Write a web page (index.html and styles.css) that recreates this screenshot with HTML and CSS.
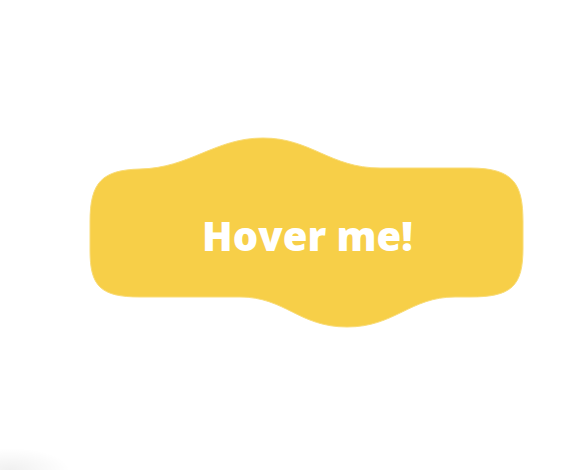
FILE: index.html
```html
<!DOCTYPE html>
<html>
<head>
<meta charset="utf-8">
<link rel="stylesheet" href="styles.css">
</head>
<body>
<div class="stage">
  <button class="blob-btn">
    <svg class="blob" viewBox="89 136 437 193" width="437" height="193" aria-hidden="true">
      <path d="M 90 222
               C 90 182, 102 170, 140 169
               C 190 168, 215 138, 263 138
               C 311 138, 330 168, 380 168
               L 470 168
               C 514 168, 523 184, 523 222
               L 523 248
               C 523 286, 512 297, 470 297
               L 455 297
               C 410 297, 395 327, 347 327
               C 299 327, 285 297, 240 297
               L 140 297
               C 100 297, 90 286, 90 250
               Z" />
    </svg>
    <span class="label">Hover me!</span>
  </button>
</div>
</body>
</html>
```
FILE: styles.css
```css
html, body {
  margin: 0;
  padding: 0;
  background: #ffffff;
}
body {
  width: 588px;
  height: 470px;
  overflow: hidden;
  background: radial-gradient(ellipse 60px 22px at 10px 470px, rgba(0,0,0,0.06), rgba(0,0,0,0) 100%), #fff;
}
.stage {
  padding: 136px 0 0 89px;
}
.blob-btn {
  display: grid;
  width: 437px;
  height: 193px;
  padding: 0;
  margin: 0;
  border: 0;
  background: transparent;
  cursor: pointer;
}
.blob, .label {
  grid-area: 1 / 1;
}
.blob {
  display: block;
}
.blob path {
  fill: #f7cf48;
  stroke: #f9dc78;
  stroke-width: 1;
}
.label {
  align-self: center;
  justify-self: center;
  padding-left: 0;
  font-family: "Open Sans", "DejaVu Sans", sans-serif;
  font-weight: 800;
  font-size: 40px;
  color: #ffffff;
  line-height: 1;
  transform: translate(0, 3px);
}
```
